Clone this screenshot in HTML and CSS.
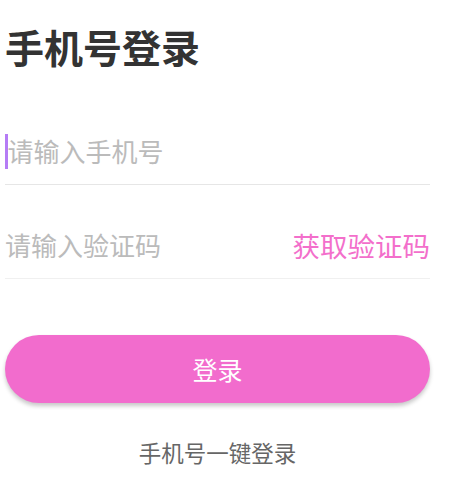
FILE: index.html
```html
<!DOCTYPE html>
<html lang="zh-CN">
<head>
<meta charset="utf-8">
<title>手机号登录</title>
<link rel="stylesheet" href="styles.css">
</head>
<body>
<main class="page">
  <h1 class="title">手机号登录</h1>
  <div class="field field-phone">
    <span class="caret"></span><span class="placeholder">请输入手机号</span>
  </div>
  <div class="field field-code">
    <span class="placeholder">请输入验证码</span>
    <span class="get-code">获取验证码</span>
  </div>
  <button class="login-btn" type="button">登录</button>
  <div class="quick-login">手机号一键登录</div>
</main>
</body>
</html>
```

FILE: styles.css
```css
html, body {
  margin: 0;
  padding: 0;
  background: #ffffff;
}

body {
  font-family: "Noto Sans CJK SC", "Noto Sans", sans-serif;
}

.page {
  width: 425px;
  margin-left: 5px;
  display: flex;
  flex-direction: column;
}

.title {
  margin: 21px 0 0 0;
  font-size: 39px;
  line-height: 50px;
  font-weight: 700;
  color: #333333;
}

.field {
  display: flex;
  align-items: center;
  height: 66px;
  border-bottom: 1px solid #e6e6e6;
}

.field-phone {
  margin-top: 47px;
}

.field-code {
  margin-top: 27px;
  justify-content: space-between;
  border-bottom-color: #f0f0f0;
}

.caret {
  width: 2.5px;
  height: 35px;
  background: #b57cf5;
  flex: none;
}

.placeholder {
  font-size: 26px;
  line-height: 36px;
  color: #bbbbbb;
}

.get-code {
  font-size: 27.5px;
  line-height: 36px;
  color: #f36fcb;
}

.login-btn {
  margin-top: 56px;
  height: 68px;
  width: 100%;
  border: none;
  border-radius: 34px;
  background: #f26ccd;
  color: #ffffff;
  font-family: inherit;
  font-size: 25px;
  box-shadow: 0 3px 4px rgba(0, 0, 0, 0.22);
  padding: 0;
}

.quick-login {
  margin-top: 34px;
  text-align: center;
  font-size: 22.5px;
  line-height: 30px;
  color: #666666;
}
```
